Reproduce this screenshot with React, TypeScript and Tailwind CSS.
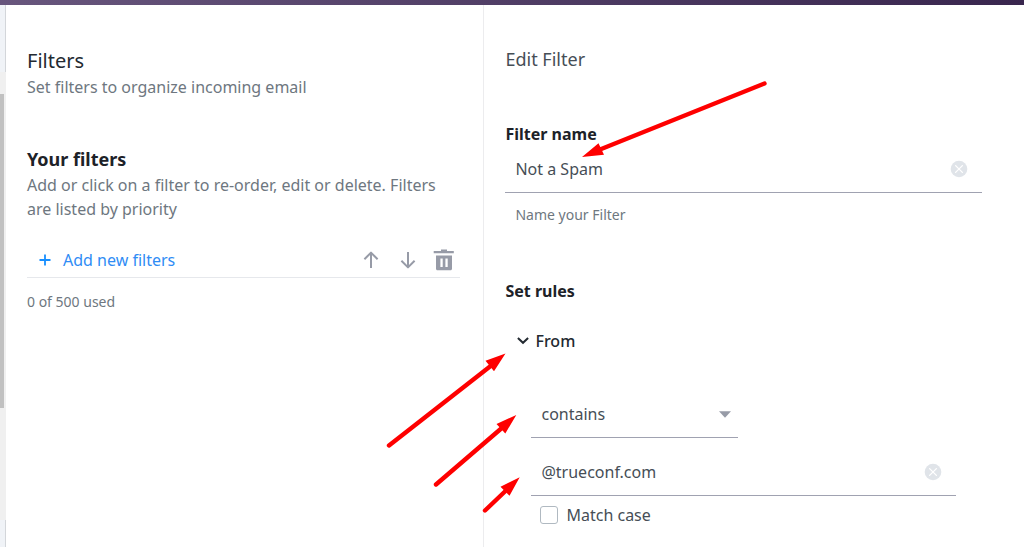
import React, { useState } from 'react';

const ClearIcon = () => (
  <svg className="block h-[18px] w-[18px]" viewBox="0 0 18 18" fill="none" aria-hidden="true">
    <circle cx="9" cy="9" r="8.3" fill="#e0e4e9" />
    <path d="M5.6 5.6l6.8 6.8M12.4 5.6l-6.8 6.8" stroke="#fff" strokeWidth="1.3" strokeLinecap="round" />
  </svg>
);

const PlusIcon = () => (
  <svg className="block h-3 w-3" viewBox="0 0 12 12" fill="none" aria-hidden="true">
    <path d="M6 .5v11M.5 6h11" stroke="#188fff" strokeWidth="1.8" />
  </svg>
);

const ArrowIcon = ({ down = false }: { down?: boolean }) => (
  <svg className="block h-[18px] w-4" viewBox="0 0 16 18" fill="none" aria-hidden="true">
    <path
      d={down ? 'M8 1v15.5M1.4 9.8L8 16.4l6.6-6.6' : 'M8 17V1.5M1.4 8.2L8 1.6l6.6 6.6'}
      stroke="#979ba7"
      strokeWidth="2"
      strokeLinejoin="round"
    />
  </svg>
);

const TrashIcon = () => (
  <svg className="block h-[22px] w-[22px]" viewBox="0 0 22 22" aria-hidden="true">
    <path
      fill="#979ba7"
      fillRule="evenodd"
      d="M8 .6h6v1.3h6.8v2.3H.7V1.9H8zM3 6.4h16v13.3c0 .9-.6 1.5-1.5 1.5h-13c-.9 0-1.5-.6-1.5-1.5zM7.4 9.6v8.4h2.3V9.6zm5 0v8.4h2.3V9.6z"
    />
  </svg>
);

// Scrollbar of the mail list that shows beside the settings panel
const ListEdge = () => (
  <div className="flex w-[6px] shrink-0 flex-col bg-[#f0f0f0]">
    <div className="grow-67 basis-0 border-r border-[#d3d6da] bg-[#f0f3f7]" />
    <div className="grow-22 basis-0" />
    <div className="w-1 grow-314 basis-0 bg-[#c1c1c1]" />
    <div className="grow-112 basis-0" />
    <div className="grow-27 basis-0 border-r border-[#d3d6da] bg-[#f0f3f7]" />
  </div>
);

const FilterList = () => (
  <section className="w-[47%] shrink-0 border-r border-[#ececee] pt-[42px] pr-[23px] pl-[21px] text-[#6e7780]">
    <h1 className="text-xl leading-7 text-[#232a31]">Filters</h1>
    <p className="text-base leading-6">Set filters to organize incoming email</p>

    <h2 className="mt-[46px] text-lg leading-7 font-bold text-[#1d2228]">Your filters</h2>
    <p className="text-base leading-6">
      Add or click on a filter to re-order, edit or delete. Filters are listed by priority
    </p>

    <div className="mt-[21px] flex h-9 items-center border-b border-[#e6e8ec] pr-[5px] pl-3">
      <button type="button" className="flex items-center gap-3 text-base leading-6 text-[#2f8cf5]">
        <PlusIcon />
        Add new filters
      </button>
      <div className="ml-auto flex items-center gap-[17px]">
        <div className="flex items-center gap-[21px]">
          <button type="button" aria-label="Move up">
            <ArrowIcon />
          </button>
          <button type="button" aria-label="Move down">
            <ArrowIcon down />
          </button>
        </div>
        <button type="button" aria-label="Delete">
          <TrashIcon />
        </button>
      </div>
    </div>
    <p className="mt-3.5 text-sm leading-5">0 of 500 used</p>
  </section>
);

interface ClearableInputProps {
  id: string;
  label?: string;
  value: string;
  onChange: (value: string) => void;
}

const ClearableInput: React.FC<ClearableInputProps> = ({ id, label, value, onChange }) => (
  <div className="flex h-[47px] items-center border-b border-[#a0a2b1] pr-3.5 pl-2.5">
    <input
      id={id}
      type="text"
      aria-label={label}
      value={value}
      onChange={(e) => onChange(e.target.value)}
      className="min-w-0 flex-1 bg-transparent text-base leading-6 text-[#464e56] outline-none"
    />
    <button type="button" aria-label="Clear" onClick={() => onChange('')}>
      <ClearIcon />
    </button>
  </div>
);

const EditFilter = () => {
  const [name, setName] = useState('Not a Spam');
  const [sender, setSender] = useState('@trueconf.com');

  return (
    <section className="min-w-0 flex-1 pt-10 pr-[42px] pb-5 pl-[21px] text-[#464e56]">
      <h2 className="text-lg leading-7 text-[#464e56]">Edit Filter</h2>

      <label htmlFor="filter-name" className="mt-[49px] block text-base leading-6 font-bold text-[#1d2228]">
        Filter name
      </label>
      <ClearableInput id="filter-name" value={name} onChange={setName} />
      <p className="mt-3 pl-2.5 text-sm leading-5 text-[#6e7780]">Name your Filter</p>

      <h3 className="mt-[54px] text-base leading-6 font-bold text-[#1d2228]">Set rules</h3>
      <button type="button" className="mt-[26px] ml-3 flex items-center gap-1.5 text-base leading-6 font-medium text-[#232a31]">
        <svg className="h-3 w-3" viewBox="0 0 12 12" fill="none" aria-hidden="true">
          <path d="M.9 3L6 7.8 11.1 3" stroke="#232a31" strokeWidth="2" />
        </svg>
        From
      </button>

      <div className="mt-[38px] mr-[26px] ml-[26px]">
        <div className="grid w-[207px] max-w-full items-center border-b border-[#a0a2b1]">
          <select
            aria-label="Condition"
            defaultValue="contains"
            className="col-start-1 row-start-1 h-[46px] appearance-none bg-transparent pl-2.5 text-base leading-6 text-[#464e56] outline-none"
          >
            <option>contains</option>
            <option>does not contain</option>
            <option>begins with</option>
            <option>ends with</option>
          </select>
          <svg
            className="pointer-events-none col-start-1 row-start-1 mr-[7px] h-[7px] w-3 justify-self-end"
            viewBox="0 0 12 7"
            aria-hidden="true"
          >
            <path d="M0 .3h12L6 6.8z" fill="#979ba7" />
          </svg>
        </div>
        <div className="mt-[11px]">
          <ClearableInput id="sender" label="From" value={sender} onChange={setSender} />
        </div>
        <label className="mt-[7px] flex w-fit items-center gap-2 pl-[9px] text-base leading-6">
          <input
            type="checkbox"
            className="h-[18px] w-[18px] appearance-none rounded-[3px] border border-[#b0b9c1] bg-white checked:bg-[#188fff]"
          />
          Match case
        </label>
      </div>
    </section>
  );
};

const PointerArrows = () => (
  <svg
    className="pointer-events-none absolute top-0 left-0 h-[547px] w-[1024px]"
    viewBox="0 0 1024 547"
    fill="#fe0000"
    aria-hidden="true"
  >
    <g stroke="#fe0000" strokeWidth="4.4" strokeLinecap="round">
      <path d="M764.5 83.5L600 149.5M389 445.5L490 366.5M436 484.5L503 427M485 510.5L506 490.5" />
    </g>
    <path d="M582 157L598.5 143.2 604 154.8zM505.500 353.500L485.500 360.800 494 371.200zM516.300 415L496.500 424 505.300 433.500zM519.700 477.200L500.500 486.800 509.500 495.700z" />
  </svg>
);

const App: React.FC = () => {
  return (
    <div className="relative flex min-h-screen flex-col overflow-hidden bg-white font-['Noto_Sans','Open_Sans',sans-serif]">
      <div className="h-[5px] bg-gradient-to-r from-[#68567d] to-[#39264e]" />
      <div className="flex flex-1">
        <ListEdge />
        <main className="flex min-w-0 flex-1">
          <FilterList />
          <EditFilter />
        </main>
      </div>
      <PointerArrows />
    </div>
  );
};

export default App;
